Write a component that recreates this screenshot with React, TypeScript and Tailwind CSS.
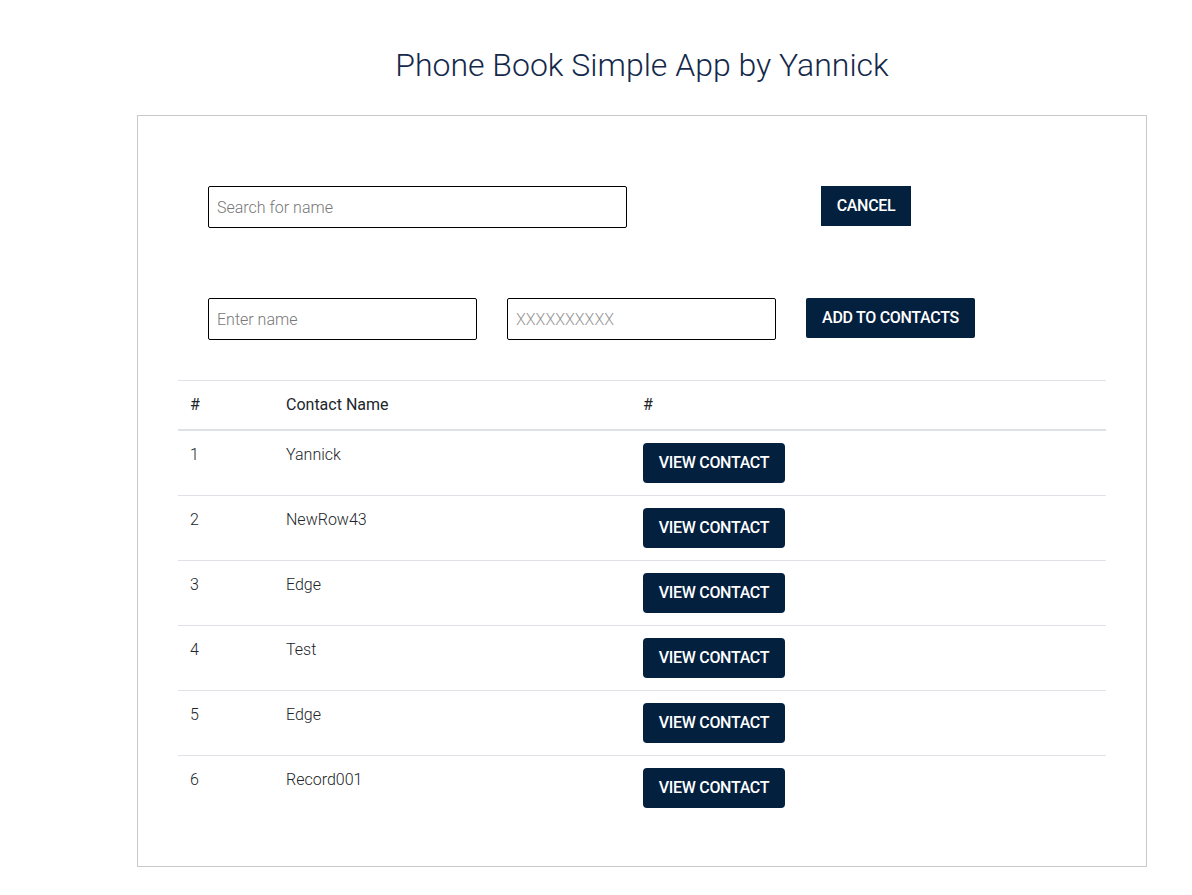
import React from "react";

const contacts = ["Yannick", "NewRow43", "Edge", "Test", "Edge", "Record001"];

const btn =
  "bg-[#03203f] text-white text-[16px] leading-6 font-medium uppercase tracking-[-0.3px] py-2";

export default function App() {
  return (
    <div className="min-h-screen bg-white font-['Roboto',sans-serif] text-[#212529]">
      <h1 className="pt-[46px] ml-[137px] w-[1010px] text-center text-[32px] leading-[38px] font-light text-[#14294a]">
        Phone Book Simple App by Yannick
      </h1>
      <div className="mt-[31px] ml-[137px] w-[1010px] border border-[#c9c9c9] px-[40px] pt-[70px] pb-[46px]">
        <div className="px-[30px]">
          <div className="flex items-start">
            <input
              placeholder="Search for name"
              className="w-[419px] h-[42px] border border-black rounded-[2px] px-2 text-[16px] font-light placeholder:text-[#777] outline-none"
            />
            <button className={`${btn} ml-[194px] w-[90px] h-[40px]`}>Cancel</button>
          </div>
          <div className="flex items-start gap-[30px] mt-[70px]">
            <input
              placeholder="Enter name"
              className="w-[269px] h-[42px] border border-black rounded-[2px] px-2 text-[16px] font-light placeholder:text-[#777] outline-none"
            />
            <input
              placeholder="XXXXXXXXXX"
              className="w-[269px] h-[42px] border border-black rounded-[2px] px-2 text-[16px] font-light placeholder:text-[#999] outline-none"
            />
            <button className={`${btn} w-[169px] h-[40px] rounded-[2px]`}>Add to contacts</button>
          </div>
        </div>
        <table className="mt-[40px] w-full border-collapse text-[16px] leading-6">
          <thead>
            <tr className="border-t border-[#dee2e6] border-b-2">
              <th className="w-[96px] text-left font-normal px-3 py-3">#</th>
              <th className="w-[357px] text-left font-normal px-3 py-3">Contact Name</th>
              <th className="text-left font-normal px-3 py-3">#</th>
            </tr>
          </thead>
          <tbody className="font-light">
            {contacts.map((name, i) => (
              <tr key={i} className={i < contacts.length - 1 ? "border-b border-[#dee2e6]" : ""}>
                <td className="px-3 py-3 align-top">{i + 1}</td>
                <td className="px-3 py-3 align-top">{name}</td>
                <td className="px-3 py-3 align-top">
                  <button className={`${btn} w-[142px] rounded-[4px]`}>View contact</button>
                </td>
              </tr>
            ))}
          </tbody>
        </table>
      </div>
    </div>
  );
}
